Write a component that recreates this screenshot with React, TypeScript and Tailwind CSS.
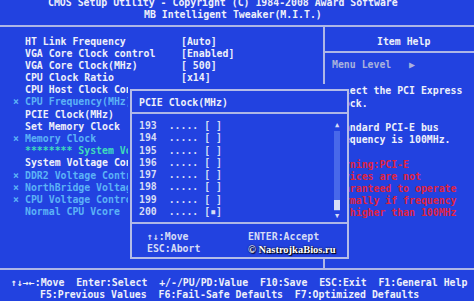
import type { ReactNode } from "react";

type Tone = "white" | "cyan" | "teal";

interface SetupRow {
  locked: boolean;
  label: string;
  value?: string;
  tone: Tone;
}

const rows: SetupRow[] = [
  { locked: false, label: "HT Link Frequency", value: "[Auto]", tone: "white" },
  { locked: false, label: "VGA Core Clock control", value: "[Enabled]", tone: "white" },
  { locked: false, label: "VGA Core Clock(MHz)", value: "[ 500]", tone: "white" },
  { locked: false, label: "CPU Clock Ratio", value: "[x14]", tone: "white" },
  { locked: false, label: "CPU Host Clock Control", value: "[Enabled]", tone: "white" },
  { locked: true, label: "CPU Frequency(MHz)", value: "2000", tone: "cyan" },
  { locked: false, label: "PCIE Clock(MHz)", value: "[200MHz]", tone: "white" },
  { locked: false, label: "Set Memory Clock", value: "[Auto]", tone: "white" },
  { locked: true, label: "Memory Clock", value: "x2.00", tone: "cyan" },
  { locked: false, label: "******** System Voltage Optimized", tone: "teal" },
  { locked: false, label: "System Voltage Control", value: "[Manual]", tone: "white" },
  { locked: true, label: "DDR2 Voltage Control", value: "[Normal]", tone: "cyan" },
  { locked: true, label: "NorthBridge Voltage", value: "[Normal]", tone: "cyan" },
  { locked: true, label: "CPU Voltage Control", value: "[Normal]", tone: "cyan" },
  { locked: false, label: "Normal CPU Vcore", value: "1.3000V", tone: "cyan" },
];

const toneClass: Record<Tone, string> = {
  white: "text-[#eef0fa]",
  cyan: "text-[#5cb2f6]",
  teal: "text-[#3fdcbc]",
};

const helpLines: { text: string; red?: boolean }[] = [
  { text: "" },
  { text: "Select the PCI Express" },
  { text: "clock." },
  { text: "" },
  { text: "Standard PCI-E bus" },
  { text: "frequency is 100MHz." },
  { text: "" },
  { text: "Warning:PCI-E", red: true },
  { text: "devices are not", red: true },
  { text: "guaranteed to operate", red: true },
  { text: "normally if frequency", red: true },
  { text: "is higher than 100MHz", red: true },
];

const clocks = [193, 194, 195, 196, 197, 198, 199, 200];

function Line({ children, className = "" }: { children: ReactNode; className?: string }) {
  return <div className={`h-[12.2px] shrink-0 whitespace-pre ${className}`}>{children}</div>;
}

export default function App() {
  return (
    <div className="relative w-[474px] h-[301px] overflow-hidden bg-[#2242e0] font-['DejaVu_Sans_Mono','Liberation_Mono',monospace] font-bold text-[9.85px] leading-[12.2px] text-[#eef0fa]">
      {/* header */}
      <div className="flex h-[25px] flex-col">
        <Line className="-mt-[3px] pl-[48px]">CMOS Setup Utility - Copyright (C) 1984-2008 Award Software</Line>
        <Line className="pl-[144px]">MB Intelligent Tweaker(M.I.T.)</Line>
      </div>

      {/* main frame */}
      <div className="flex h-[245px] border-y-2 border-[#aeb6e6]">
        <div className="w-[325px] border-r-2 border-[#aeb6e6] pt-[8.5px]">
          {rows.map((row) => (
            <div key={row.label} className={`flex h-[12.2px] pl-[13px] whitespace-pre ${toneClass[row.tone]}`}>
              <span className="w-[12px]">{row.locked ? "\u00D7" : ""}</span>
              <span className="w-[156px] overflow-hidden">{row.label}</span>
              <span>{row.value ?? ""}</span>
            </div>
          ))}
        </div>
        <div className="flex-1">
          <div className="h-[26px] border-b-2 border-[#aeb6e6] pt-[8.5px] pl-[52px]">Item Help</div>
          <div className="pt-[6px] pl-[7px]">
            <Line className="mb-[2px] text-[#aab2dc]">{"Menu Level   \u25B6"}</Line>
            {helpLines.map((l, i) => (
              <Line key={i} className={l.red ? "text-[#e0223e]" : "text-[#eef0fa]"}>
                {l.text}
              </Line>
            ))}
          </div>
        </div>
      </div>

      {/* key bar */}
      <div className="pt-[6.5px]">
        <Line className="pl-[11px]">{"\u2191\u2193\u2192\u2190:Move  Enter:Select  +/-/PU/PD:Value  F10:Save  ESC:Exit  F1:General Help"}</Line>
        <Line className="pl-[40px]">F5:Previous Values  F6:Fail-Safe Defaults  F7:Optimized Defaults</Line>
      </div>

      {/* PCIE clock popup, with its clear margin */}
      <div className="absolute left-[128px] top-[84px] bg-[#2242e0] pt-[5px] pl-[2px]">
        <div className="flex h-[170px] w-[219px] flex-col border-2 border-[#b4bce8]">
          <div className="h-[23px] border-b-2 border-[#aeb6e6] pt-[5.5px] pl-[7px]">PCIE Clock(MHz)</div>
          <div className="flex h-[110px] border-b-2 border-[#aeb6e6] pt-[6px] pl-[7px] pr-[6px]">
            <div className="text-[#d6dcf6]">
              {clocks.map((c) => (
                <Line key={c} className="h-[12.3px]">
                  {`${c}  ..... [`}
                  <span className="inline-block w-[5.93px] text-center">{c === 200 ? "\u25AA" : " "}</span>
                  {"]"}
                </Line>
              ))}
            </div>
            <div className="ml-auto flex w-[8px] flex-col items-center">
              <span className="h-[11px] text-[7px] leading-[11px] text-[#d6dcf6]">{"\u25B2"}</span>
              <div className="flex w-[6px] flex-1 flex-col bg-[#4868ea]">
                <div className="flex-1" />
                <div className="mb-[1px] h-[10px] bg-[#d8def6]" />
              </div>
              <span className="h-[11px] text-[7px] leading-[11px] text-[#d6dcf6]">{"\u25BC"}</span>
            </div>
          </div>
          <div className="flex pt-[7px] text-[#d6dcf6]">
            <div className="w-[116px] pl-[15px]">
              <Line>{"\u2191\u2193:Move"}</Line>
              <Line>ESC:Abort</Line>
            </div>
            <div>
              <Line>ENTER:Accept</Line>
              <div className="h-[13px] whitespace-pre font-['Liberation_Serif',serif] text-[10.5px] leading-[13px] text-white [text-shadow:0_0_2px_#000,1px_1px_1px_#000]">
                {"\u00A9 NastrojkaBios.ru"}
              </div>
            </div>
          </div>
        </div>
      </div>
    </div>
  );
}
